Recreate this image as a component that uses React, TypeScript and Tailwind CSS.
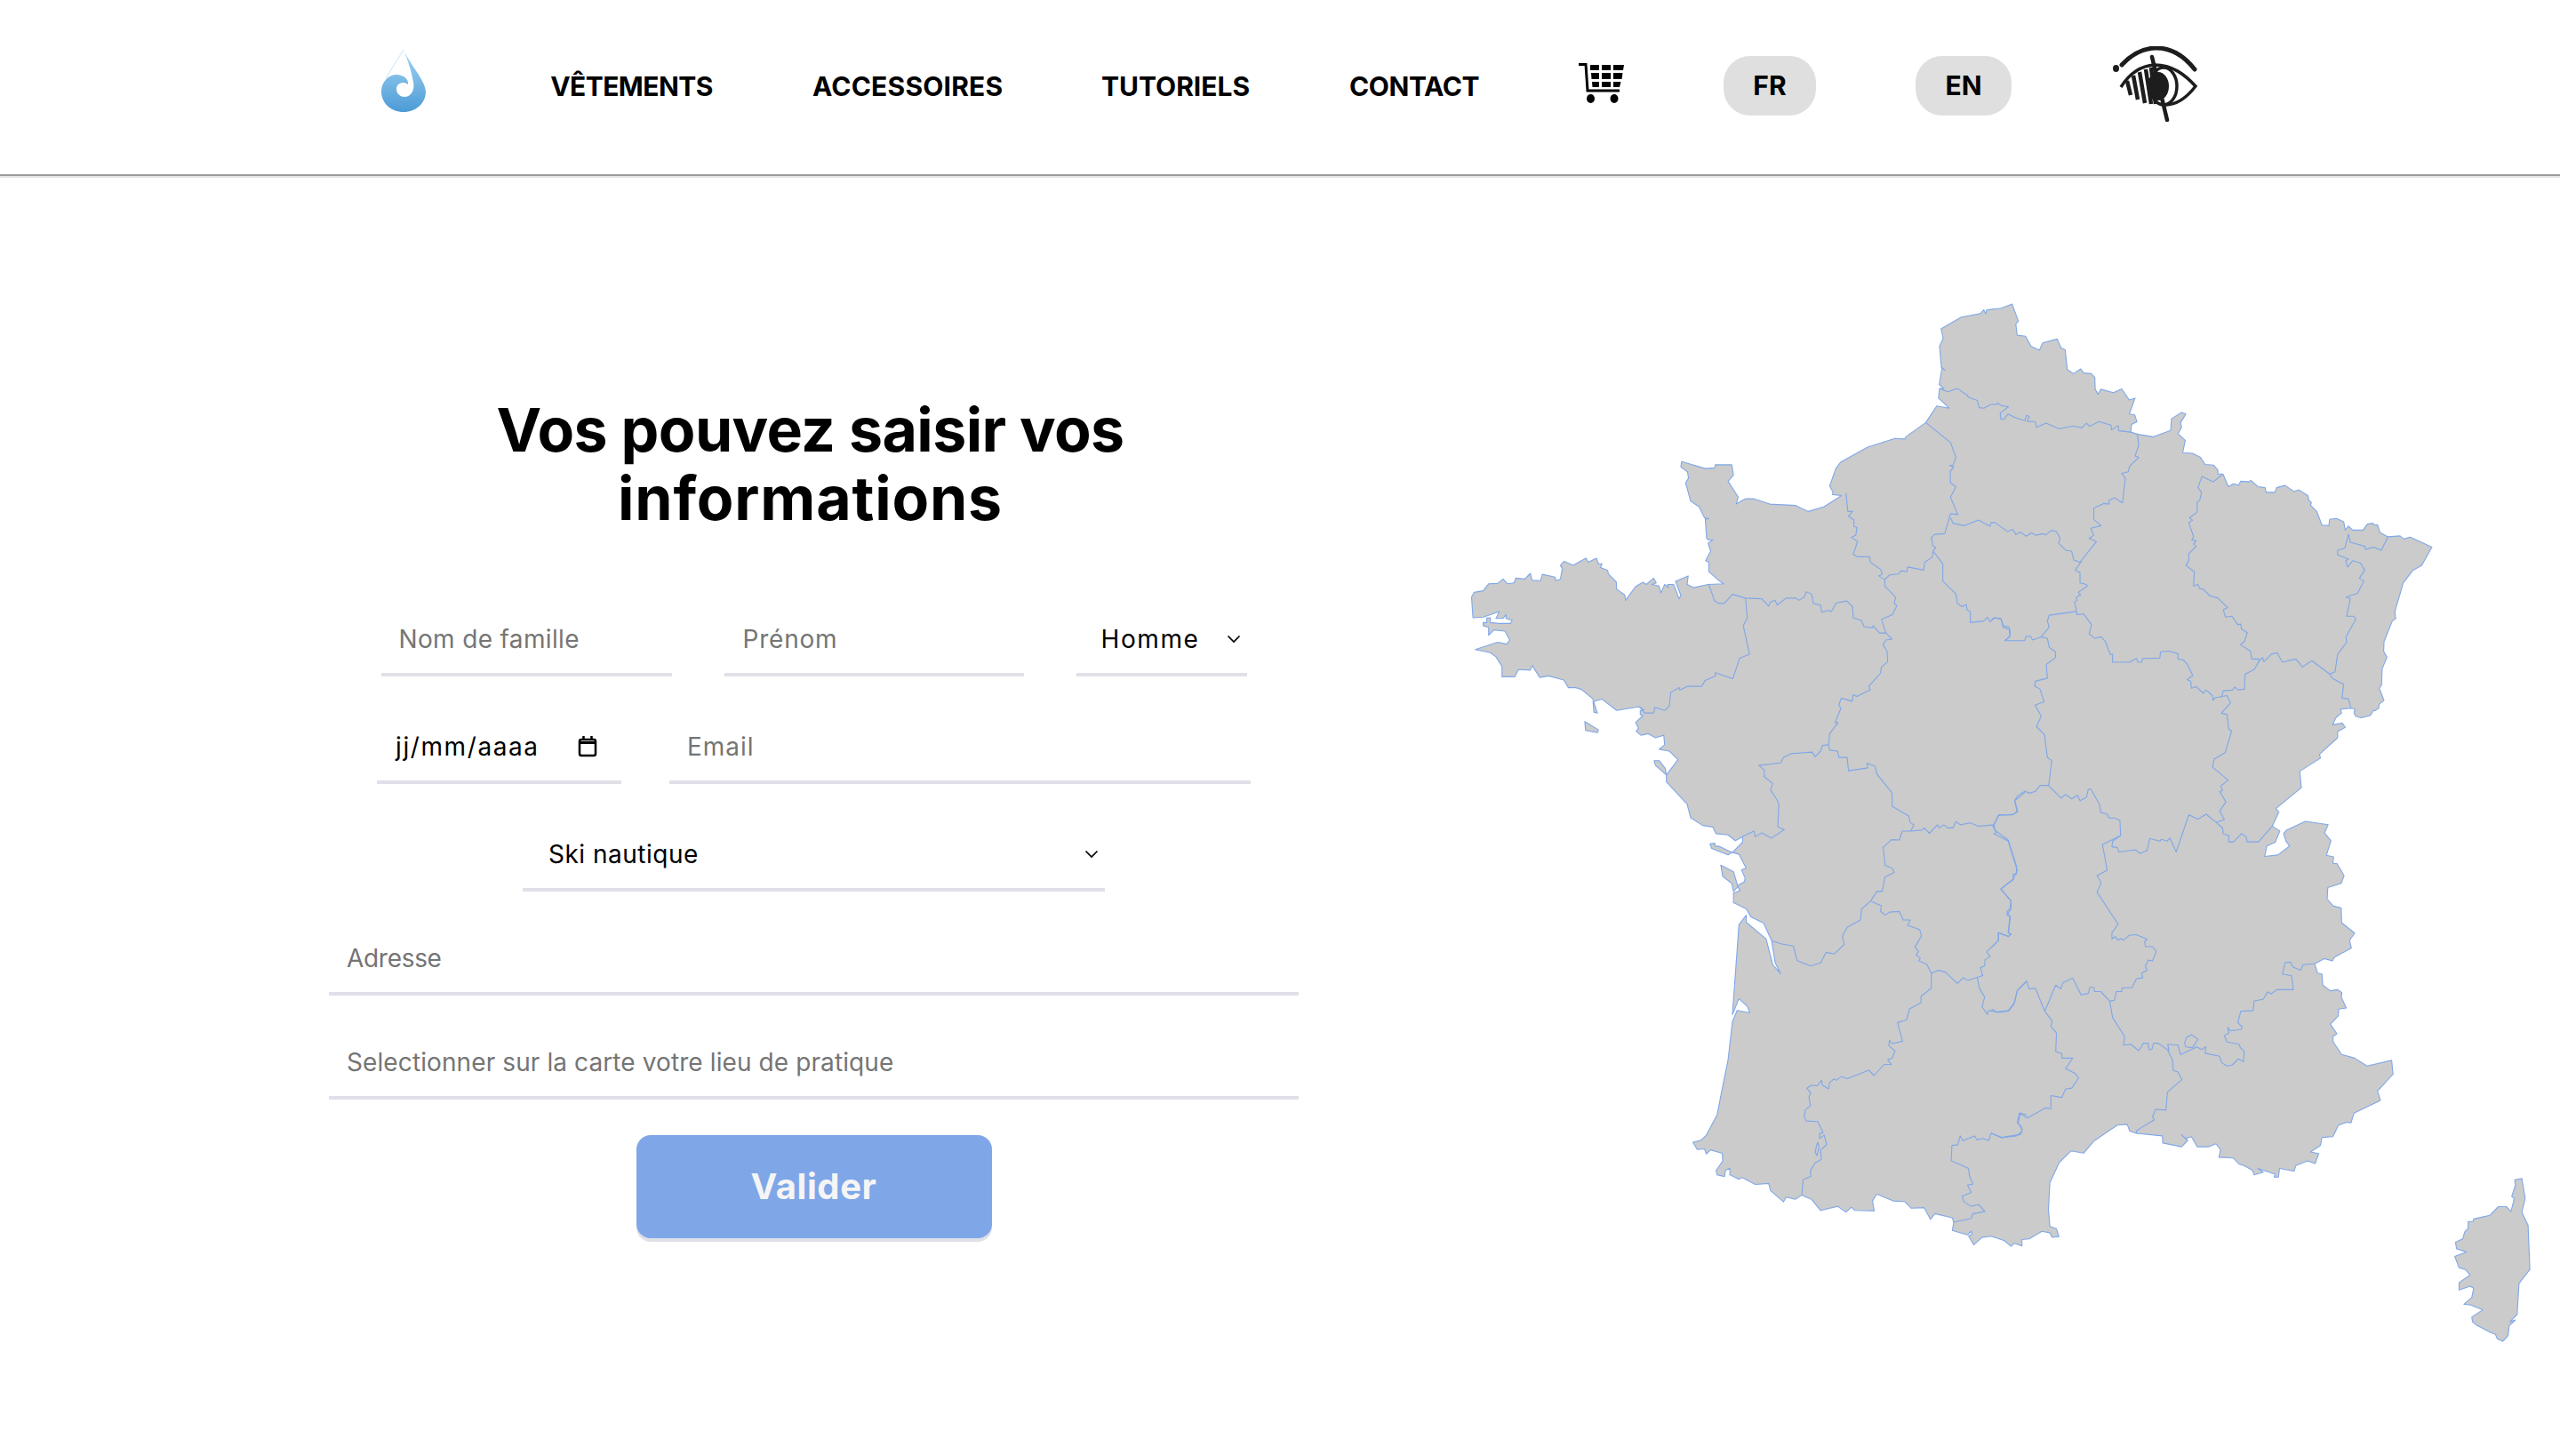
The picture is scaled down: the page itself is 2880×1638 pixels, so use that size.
import React from "react";

const T: Record<string, [number, number, number]> = {
  A: [1640, 320, 2.8],
  B: [2240, 320, 2.8],
  C: [1640, 860, 2.8],
  D: [2240, 860, 2.376],
};
const seg = (k: string, s: string) => {
  const [x0, y0, sy] = T[k];
  return s.trim().split(/\s+/).map((p) => {
    const [x, y] = p.split(",").map(Number);
    return `${(x0 + x / 2.45).toFixed(1)} ${(y0 + y / sy).toFixed(1)}`;
  });
};
const path = (close: boolean, ...parts: [string, string][]) => {
  const pts = parts.flatMap(([k, s]) => seg(k, s));
  return "M" + pts.join("L") + (close ? "Z" : "");
};

const outline = path(true,
  ["B", "58,62 75,115 68,125 72,160 95,163 110,195 133,207 142,184 182,172 193,200 204,206 210,268 227,281 247,266 255,279 276,281 286,293 287,330 295,346 302,330 337,341 360,329 381,364 397,358 381,408 396,411 402,433 387,441 385,465 405,472 446,480 495,460 497,423 525,403 537,408 522,435 525,450 515,470 535,491 528,530 555,532 577,545 590,567 613,569 625,585 625,597 639,597 654,637 668,628 682,632 688,620 712,622 716,617 735,637 755,640 758,655 782,655 787,640 810,633 835,652 848,647 873,665 876,680 883,687 880,695 898,716 912,758 931,760 933,740 952,737 972,748 976,774 985,761 997,774 1025,774 1037,755 1052,752 1057,758 1065,757 1072,782 1094,795 1127,792 1138,802 1155,796 1215,827 1187,885 1162,901 1136,940 1113,1030 1115,1053 1106,1060 1083,1125 1082,1155 1091,1175 1078,1210 1076,1262 1070,1272 1083,1310 1070,1322 1068,1335 1058,1343 1055,1340 1045,1358 1020,1365 1005,1360 1000,1350 1003,1337 990,1335 963,1338 966,1350 950,1365 941,1387 968,1382 976,1395 955,1408 955,1428 905,1480 908,1492"],
  ["D", "851,18 855,62 785,118 793,127 775,165 796,178 783,208 760,218 754,246 790,242 823,218 813,205 806,185 815,175 866,152 929,161 919,183 937,204 924,243 944,247 942,265 953,265 973,297 965,318 928,329 926,360 943,378 965,384 966,423 1002,451 988,470 993,491 945,516 941,525 918,519 892,533 900,558 912,560 914,590 935,605 955,602 967,610 965,622 979,651 958,654 957,672 935,694 953,720 942,727 943,742 966,775 1002,785 1036,806 1104,791 1108,828 1065,873 1073,898 1000,932 992,958 980,956 957,965 942,995 912,997 908,1018 880,1036 903,1040 893,1067 872,1060 840,1072 835,1087 795,1080 792,1103 780,1103 783,1095 750,1085 735,1080 750,1090 725,1097 720,1085 698,1073 683,1068 668,1052 628,1050 632,1030 620,1014 600,1022 568,1022 552,995 535,1000 525,990 542,1005 525,1022 473,1012 472,993 400,986 382,980 375,962 348,964 283,1007 255,1039 220,1033 188,1064 162,1118 158,1190 162,1235 180,1241 187,1262 168,1264 162,1252 140,1248 105,1268 85,1270 85,1287 65,1280 55,1288 35,1272"],
  ["C", "1470,1486 1445,1490 1422,1513 1408,1485 1418,1480 1415,1470 1405,1482 1363,1468 1367,1442 1363,1428 1315,1415 1303,1433 1285,1396 1250,1398 1232,1377 1200,1375 1155,1353 1143,1375 1148,1406 1095,1405 1085,1395 1070,1410 1047,1392 1000,1405 975,1370 948,1357 930,1370 905,1363 898,1378 862,1342 857,1320 820,1323 783,1301 775,1307 750,1292 750,1272 738,1278 735,1298 715,1293 712,1279 730,1250 729,1225 697,1214 685,1227 680,1211 660,1213 648,1190 670,1184 685,1168 715,1103 727,1033 745,930 757,810 770,775 805,782 798,762 775,738 757,788 775,505 795,475 795,497 850,550 868,630 890,660 875,625 865,555 843,500 808,480 795,455 760,435 760,405 778,398 770,382 790,370 792,358 782,332 795,327 775,283 757,277 785,245 785,228 765,240 745,222 712,218 703,197 675,192 642,168 632,125 575,55"],
  ["A", "575,1545 607,1497 583,1470 555,1464 570,1450 568,1420 545,1428 525,1415 505,1420 492,1408 498,1397 490,1380 510,1358 503,1355 503,1342 513,1340 500,1330 438,1342 397,1306 373,1315 375,1347 385,1350 372,1305 340,1275 325,1270 305,1270 292,1246 250,1233 226,1238 205,1200 200,1215 167,1213 157,1236 122,1236 122,1203 105,1173 90,1160 48,1150 110,1127 135,1133 143,1120 130,1092 100,1088 85,1105 85,1080 70,1075 70,1065 80,1065 80,1050 90,1050 90,1065 115,1068 145,1068 150,1058 133,1052 133,1040 125,1052 105,1052 115,1030 70,1048 42,1050 38,985 45,970 70,965 85,943 110,942 125,928 137,943 155,940 160,925 185,928 200,910 205,932 228,933 233,913 268,922 270,933 283,928 288,895 283,885 293,872 318,885 353,862 360,875 382,862 388,880 398,880 393,892 413,900 415,912 437,938 438,960 460,978 463,995 470,983 490,952 510,938 520,945 540,925 547,940 535,945 555,950 560,972 570,945 580,955 578,945 595,945 610,990 615,980 600,935 635,918 632,945 650,955 690,945 733,943 722,935 692,905 692,875 683,870 697,840 690,815 703,805 692,805 686,800 682,738 692,738 680,735 665,700 642,683 628,625 636,610 633,590 615,575 617,558 682,580 708,578 710,568 755,568 760,600 745,620 773,670 767,692 790,677 795,675 815,675 860,692 930,696 966,715 1010,700 1058,665 1033,662 1034,654 1025,635 1042,580 1055,560 1130,512 1205,485 1232,487 1235,480 1290,435 1320,383 1355,390 1325,358 1328,328 1340,328 1327,315 1335,262 1343,270 1333,262 1328,195 1338,170 1332,140 1388,103 1440,92 1450,80 1455,92 1458,80 1498,75"]
);

const islands = [
  path(true, ["D", "1443,1110 1463,1107 1472,1160 1463,1197 1480,1232 1485,1350 1455,1387 1450,1470 1430,1490 1445,1485 1428,1500 1425,1527 1410,1542 1395,1535 1390,1523 1380,1520 1340,1500 1327,1490 1325,1477 1355,1458 1323,1445 1303,1443 1325,1425 1330,1400 1320,1395 1290,1405 1290,1385 1320,1365 1307,1350 1290,1345 1278,1315 1310,1303 1283,1295 1280,1277 1300,1268 1305,1250 1315,1240 1315,1222 1328,1222 1330,1215 1375,1205 1398,1182 1420,1182 1433,1195 1442,1160 1435,1155 1445,1125"]),
  path(true, ["A", "350,1377 388,1403 385,1412 352,1405"]),
  path(true, ["A", "541,1500 555,1500 572,1525 575,1545 545,1515"]),
  path(true, ["C", "695,250 708,248 710,258 720,258 745,272 757,277 745,285 700,265"]),
  path(true, ["C", "725,317 760,338 772,385 760,400 755,375 730,352"]),
];

const borders = [
  path(false, ["A", "1290,435 1358,498 1373,545 1365,570 1355,570 1367,575 1357,590 1358,625 1373,637 1358,670 1378,725 1358,722 1342,785 1315,787 1305,797 1310,825 1318,828 1310,840 1307,860 1287,875 1284,900 1240,890 1238,905 1222,902 1215,912 1190,915 1177,930"]),
  path(false, ["A", "1070,657 1075,715 1088,715 1077,730 1092,742 1092,763 1100,765 1097,790 1085,797 1102,810 1090,850 1102,858 1135,858 1137,875 1165,897 1170,912 1160,918 1177,930 1177,950 1207,985 1203,1005 1210,1012 1198,1040 1168,1055 1180,1098"]),
  path(false, ["A", "692,945 708,997 720,1005 735,1004 757,976 793,988 838,990 857,1013 862,1000 875,995 880,1010 905,988 932,988 940,995 955,985 960,968 975,975 980,1005 1000,1010 1003,1033 1020,1027 1030,1030 1043,1003 1072,997 1088,1015 1090,1050 1112,1058 1120,1078 1142,1082 1145,1075 1162,1098 1180,1098 1197,1117 1180,1120 1172,1135 1183,1155 1185,1188 1168,1205 1165,1225 1133,1265 1137,1277 1100,1298 1090,1292 1087,1313 1057,1303 1050,1325 1056,1335 1040,1380 1048,1380 1025,1415 1022,1450"]),
  path(false, ["A", "793,988 798,1050 787,1075 804,1165 777,1177 758,1242 710,1223 710,1233 682,1247 672,1266 633,1266 612,1278 610,1270 587,1285 583,1328 570,1342 543,1332 540,1350 515,1350 500,1330"]),
  path(false, ["A", "1022,1450 1025,1467 1047,1470 1050,1490 1073,1490 1077,1532 1130,1523 1128,1508 1150,1518 1155,1540"], ["C", "1155,30 1197,90 1197,132 1243,162 1247,183 1257,190 1248,210"]),
  path(false, ["A", "1022,1450 1005,1452 1000,1470 985,1488 977,1473 918,1478 898,1490 890,1507 830,1515 845,1530 845,1550"], ["C", "843,37 868,60 862,80 880,112 885,125 882,197 900,205 865,232 838,216 820,228 816,210 785,227"]),
  path(false, ["C", "865,555 890,565 925,572 935,617 972,635 1000,625 1015,592 1038,597 1065,567 1060,540 1073,513 1110,490 1113,455 1138,430 1155,400 1170,400 1177,355 1203,340 1198,328 1178,318 1175,287 1172,262 1195,237 1217,238 1225,210 1248,210 1280,207 1285,200 1300,217 1322,190 1327,200 1340,190 1350,200 1365,200 1373,180 1385,190 1413,184 1435,195 1478,190 1490,160 1530,158 1543,147 1535,113 1545,97 1565,83"]),
  path(false, ["C", "1478,190 1480,207 1517,238 1540,320 1540,345 1530,345 1532,362 1497,392 1525,430 1525,455 1513,475 1523,480 1518,530 1525,535 1518,542 1490,530 1490,555 1458,590 1467,605 1453,615 1452,635 1440,640 1447,665 1405,680 1393,672 1377,690 1345,655 1325,648 1305,658 1293,630 1270,618 1275,610 1263,600 1270,590 1260,575 1278,540 1273,520 1240,507 1247,490 1228,490 1217,463 1190,465 1178,475 1165,462 1168,445 1140,432"]),
  path(false, ["C", "1305,658 1305,705 1277,730 1277,750 1245,770 1237,805 1212,813 1226,872 1197,880 1190,868 1188,885 1205,903 1197,925 1185,930 1195,945 1175,945 1147,980 1133,963 1073,990 1057,983 1043,995 1037,990 1025,1002 1022,1022 1005,1010 1003,995 990,1013 975,1010 962,1020 973,1035 968,1048 972,1075 958,1088 955,1110 960,1123 992,1125 1007,1160 997,1163 997,1178 1010,1168 1017,1197 1000,1215 1002,1245 985,1255 972,1280 973,1298 952,1308 948,1357"]),
  path(false, ["C", "1432,670 1437,703 1452,733 1445,763 1460,788 1463,775 1490,781 1518,777 1533,755 1542,712 1568,682"]),
  path(false, ["C", "1568,1105 1550,1098 1545,1130 1556,1150 1552,1165 1500,1175 1470,1162 1463,1185 1448,1178 1430,1182 1425,1170 1392,1185 1385,1170 1378,1198 1362,1200 1360,1248 1408,1273 1410,1295 1420,1322 1405,1325 1415,1348 1390,1360 1395,1378 1415,1392 1435,1386 1453,1408 1420,1415 1415,1430 1365,1442"]),
  path(true, ["C", "992,1190 996,1205 990,1232 985,1222 988,1205"]),
  path(false, ["D", "0,985 28,998 70,993 85,980 83,968 72,958 78,932 100,945 150,918 165,920 165,885 195,890 205,868 222,865 241,838 230,825 205,813 225,785 195,785 195,773 178,768 180,718 165,700 168,685 148,660 122,598 105,600 98,580 72,605 65,635 48,658 15,662 5,655 0,657"]),
  path(false, ["D", "148,660 178,590 192,600 198,583 225,571 248,616 268,612 272,596 283,596 285,607 302,607 327,633 340,630 345,607 360,607 361,597 388,597 400,573 418,570 415,558 430,550 425,540 433,523 445,525 455,500 445,487 425,487 423,473 430,467 400,455 380,457 365,470 358,465 350,470 342,460 333,467 333,450 350,427 292,342 303,316 292,297 320,283 307,214 357,190 355,150 340,143 325,143 320,133 302,128 298,105 275,66 268,66 263,88 245,97 238,82 222,92 205,80 193,90 158,56 135,56 122,72 105,77 95,72 75,90 65,97 72,127 58,135 22,135 5,165 15,182 8,185 47,205 72,283 62,305 27,333 55,365 52,385 43,395 52,405 47,450 55,453 47,460 20,450 20,470 0,490"]),
  path(false, ["B", "160,1568 167,1500 155,1490 147,1418 125,1393 138,1360 121,1325 146,1315 135,1275 120,1265 122,1250 155,1240 152,1197 178,1175 177,1157 160,1143 155,1115 138,1110 160,1080 155,1060 160,1042 235,1030"]),
  path(false, ["D", "158,56"], ["B", "160,1568"]),
  path(false, ["B", "138,1110 115,1120 108,1108 97,1108 92,1122 38,1122 52,1108 50,1080 33,1075 27,1052 8,1050 0,1058"]),
  path(false, ["A", "1358,735 1365,752 1395,760 1435,742 1455,755 1467,762"], ["B", "0,750 10,750 45,778 60,772 68,788 80,780 97,793 112,782 122,790 145,785 150,790 165,775 180,778 190,800 186,815 207,838 222,840 228,868 245,875 290,810 270,800 283,790 275,768 303,760 283,740 283,705 310,690 325,692 325,680 340,672 362,688 370,610 360,595 378,590 382,572 407,545 397,540 407,505 403,472"]),
  path(false, ["B", "250,870 232,900 245,908 245,940 263,945 265,950 240,970 247,978 235,985 237,995 230,1000 237,1040 255,1038 277,1072 270,1100 285,1115 303,1110 315,1125 328,1165 335,1165 335,1190 365,1190 382,1190 400,1178 405,1190 415,1190 418,1178 465,1177 467,1157 490,1155 515,1163 515,1180 530,1183 540,1195 556,1232 540,1245 550,1250 552,1272 565,1267 585,1288 592,1277 610,1295 612,1310 617,1302 650,1295 660,1318 635,1350 650,1355 655,1400 663,1407 645,1475 633,1483 615,1495 610,1520 620,1530"], ["D", "653,42 633,58 638,70 630,72 647,100 630,125 643,147 620,155 638,170 640,185 655,190 655,207 668,207 690,185 703,193 705,207 737,207 775,165"]),
  path(false, ["D", "620,155 593,133 570,146 545,135 510,234 493,197 485,205 470,200 465,205 437,198 430,230 410,238 398,228 352,234 348,222 333,220 335,205 357,190"]),
  path(false, ["D", "892,533 860,535 853,550 832,542 825,528 810,530 803,560 828,565 833,602 788,602 772,613 762,608 750,628 725,632 722,658 688,660 680,690 692,702 690,708 660,712 652,703 655,718 643,725 650,742 683,748 687,757 698,767 695,795 682,787 665,803 650,806 635,797 630,780 590,772 592,755 580,762 567,755 522,776 515,750 487,748 490,765 460,745 448,745 443,762 435,762 433,745 420,745 407,765 385,748 365,750 368,727 335,677 327,633"]),
  path(true, ["D", "538,730 552,722 570,735 555,757 537,755 533,745"]),
  path(false, ["D", "487,765 500,790 502,818 515,822 526,842 486,876 482,924 453,922 445,942 450,950 418,968 400,980 402,986"]),
  path(false, ["B", "639,597 612,622 581,605 570,640 580,655 575,680 568,685 568,717 547,735 555,743 545,750 558,795 553,805 565,808 558,818 565,825 545,848 545,870 537,885 560,905 558,950 570,945 575,958 585,960 602,980 625,988 652,1018 640,1025 646,1048 664,1045 680,1072 688,1070 690,1085 706,1097 698,1125 687,1135 715,1155 718,1180 738,1180 737,1190 725,1213 700,1228 698,1275 680,1277 672,1268 665,1278 640,1280 635,1300"]),
  path(false, ["B", "737,1190 748,1175 752,1188 772,1165 788,1160 803,1190 840,1180 858,1205 884,1185 933,1227 948,1220 955,1165 980,1127 978,1110 1005,1055 1000,1045 980,1045 990,990 978,985 1010,973 1027,935 1015,925 1030,900 1018,878 997,870 983,890 977,870 985,865 955,852 955,838 975,830 985,787 990,812 1030,825 1032,835 1055,827 1075,838 1094,795"]),
  path(false, ["B", "933,1227 940,1240 972,1260 967,1303 985,1305 992,1335"]),
  path(false, ["A", "1310,840 1337,880 1337,935 1373,975 1377,1005 1390,1015 1402,1008 1403,1025 1413,1030 1413,1065 1450,1060 1460,1048 1467,1063 1480,1050 1498,1055 1503,1080 1522,1088 1522,1110 1508,1122"]),
  path(false, ["A", "1328,328 1350,338 1378,328 1405,350 1407,355 1432,365 1437,388 1450,390 1470,378"], ["B", "15,378 18,373 28,382 48,385 25,405 27,425 35,425 47,408 63,418 93,430 97,413 105,415 100,432 122,432 125,450 152,437 187,455 225,446 250,452 263,437 272,447 297,432 330,443 332,458 350,445 352,461 385,465"]),
];

function Logo() {
  return (
    <svg width="50" height="70" viewBox="0 0 50 70" className="shrink-0 mr-[28px] -mt-[14px]">
      <defs>
        <linearGradient id="drop" x1="0" y1="0" x2="0" y2="1">
          <stop offset="0" stopColor="#a5d6f4" />
          <stop offset="1" stopColor="#4c9bd6" />
        </linearGradient>
      </defs>
      <path d="M25 0L5 32" stroke="#b5def8" strokeWidth="0.8" fill="none" />
      <path
        d="M25 0C30 13 50 35 50 47C50 60 39 70 25 70C11 70 0 60 0 47C0 36 8 28 17 28C25 28 31 33 30 39C26 35 17 37 17 44C17 50 22 53 26 53C33 53 38 46 36 36C34 24 29 10 25 0Z"
        fill="url(#drop)"
      />
    </svg>
  );
}

function Cart() {
  return (
    <svg width="51" height="45" viewBox="0 0 51 45" className="shrink-0 -mt-[9px] ml-[1px]">
      <path d="M0 1.500H8L10 31H46" fill="none" stroke="#000" strokeWidth="3" />
      <path d="M13 2H23V8H13ZM26 2H36V8H26ZM39 2H51L50 8H39ZM14 11H23V18H14.500ZM26 11H36V18H26ZM39 11H49.500L48.500 18H39ZM15 21H23V27H15.500ZM26 21H36V27H26ZM39 21H47.500L46 27H39Z" fill="#000" />
      <ellipse cx="13.500" cy="40" rx="4.500" ry="5" fill="#000" />
      <ellipse cx="40" cy="40" rx="4.500" ry="5" fill="#000" />
    </svg>
  );
}

function Eye() {
  return (
    <svg width="96" height="85" viewBox="0 0 96 85" className="shrink-0 -mt-[7px] ml-[1px]" fill="none" stroke="#1d1d1d">
      <path d="M11 21C24 7 36 2 50 2C68 2 82 12 93 26" strokeWidth="5" strokeLinecap="round" />
      <ellipse cx="4.500" cy="25" rx="3.500" ry="4" fill="#1d1d1d" stroke="none" />
      <path d="M10 46C20 30 32 22 48 21C68 21 82 32 94 45C84 58 72 66 60 66" strokeWidth="3.500" />
      <ellipse cx="58" cy="45" rx="15" ry="21" strokeWidth="3.500" />
      <path d="M17 39L21 55M24 33L29 60M31 29L37 64M38 26L44 65M44 24L49 65" strokeWidth="4.500" />
      <ellipse cx="52" cy="45" rx="12" ry="16" fill="#1d1d1d" stroke="none" />
      <path d="M45 12L62 83" strokeWidth="4.500" strokeLinecap="round" />
    </svg>
  );
}

const Chevron = ({ className }: { className: string }) => (
  <svg width="16" height="10" viewBox="0 0 16 10" className={className} fill="none" stroke="#000" strokeWidth="1.700">
    <path d="M1.500 1.500L8 8L14.500 1.500" />
  </svg>
);

const navClass = "-mt-[3px] whitespace-nowrap text-center text-[30px] font-bold leading-none text-black";
const fieldClass = "flex h-[80px] items-center border-b-4 border-[#e0e1e8] text-[28px] whitespace-nowrap";

export default function App() {
  return (
    <div className="min-h-[1638px] w-[2880px] overflow-hidden bg-white font-['Inter',sans-serif]">
      <header className="flex h-[196px] items-center gap-[112px] pl-[429px] shadow-[0_2px_0_#9b9b9b,0_4px_0_#e6e6e6]">
        <Logo />
        <a className={`${navClass} w-[183px] tracking-[-0.55px]`}>VÊTEMENTS</a>
        <a className={`${navClass} w-[213px] tracking-[0.2px]`}>ACCESSOIRES</a>
        <a className={`${navClass} w-[167px]`}>TUTORIELS</a>
        <a className={`${navClass} w-[145px] tracking-[-0.4px]`}>CONTACT</a>
        <Cart />
        <button className="-mt-[3px] flex h-[67px] w-[104px] items-center justify-center rounded-[30px] bg-[#dfdfdf] text-[30px] font-bold text-black">FR</button>
        <button className="-mt-[3px] flex h-[67px] w-[108px] items-center justify-center rounded-[30px] bg-[#dfdfdf] text-[30px] font-bold text-black">EN</button>
        <Eye />
      </header>

      <main className="flex items-start">
        <section className="ml-[370px] flex w-[1091px] flex-col items-center pt-[249px]">
          <h1 className="-ml-[8px] w-[800px] text-center text-[68px] font-bold leading-[77px] text-black">
            <span className="tracking-[-0.6px]">Vos pouvez saisir vos</span>
            <br />
            <span className="tracking-[0.8px]">informations</span>
          </h1>

          <div className="mt-[82px] flex gap-[59px]">
            <div className={`${fieldClass} w-[327px] pl-[20px] text-[#757575] tracking-[0.35px]`}>Nom de famille</div>
            <div className={`${fieldClass} w-[337px] pl-[21px] text-[#757575] tracking-[0.8px]`}>Prénom</div>
            <div className={`${fieldClass} w-[192px] justify-between pl-[28px] pr-[7px] text-black tracking-[1.6px]`}>
              Homme
              <Chevron className="shrink-0" />
            </div>
          </div>

          <div className="mt-[41px] flex gap-[54px]">
            <div className={`${fieldClass} w-[275px] justify-between pl-[21px] pr-[27px] text-black tracking-[1.6px]`}>
              jj/mm/aaaa
              <svg width="22" height="24" viewBox="0 0 22 24" className="shrink-0" fill="none" stroke="#000">
                <rect x="2" y="4" width="18" height="18" rx="2" strokeWidth="2.500" />
                <path d="M2 6H20V9H2Z" fill="#000" stroke="none" />
                <path d="M6.500 0V4M15.500 0V4" strokeWidth="2.500" />
              </svg>
            </div>
            <div className={`${fieldClass} w-[654px] pl-[20px] text-[#757575] tracking-[1px]`}>Email</div>
          </div>

          <div className={`${fieldClass} mt-[41px] w-[655px] justify-between pl-[29px] pr-[7px] text-black tracking-[0.5px]`}>
            Ski nautique
            <Chevron className="shrink-0" />
          </div>

          <div className={`${fieldClass} mt-[37px] w-[1091px] pl-[20px] text-[#757575] tracking-[-0.3px]`}>Adresse</div>
          <div className={`${fieldClass} mt-[37px] w-[1091px] pl-[20px] text-[#757575] tracking-[0.1px]`}>
            Selectionner sur la carte votre lieu de pratique
          </div>

          <button className="mt-[40px] flex h-[116px] w-[400px] items-center justify-center rounded-[16px] bg-[#7fa7e8] text-[40px] font-bold tracking-[0.6px] text-[#f5f5f5] shadow-[0_4px_0_#e0e1e8]">
            Valider
          </button>
        </section>

        <svg width="1240" height="1200" viewBox="1640 320 1240 1200" className="ml-[179px] mt-[124px] shrink-0">
          <g fill="#cbcbcb" stroke="#7fa7e8" strokeWidth="1.100" strokeLinejoin="round">
            <path d={outline} />
            {islands.map((d, i) => (
              <path key={i} d={d} />
            ))}
          </g>
          <g fill="none" stroke="#7fa7e8" strokeWidth="1.100" strokeLinejoin="round">
            {borders.map((d, i) => (
              <path key={i} d={d} />
            ))}
          </g>
        </svg>
      </main>
    </div>
  );
}
